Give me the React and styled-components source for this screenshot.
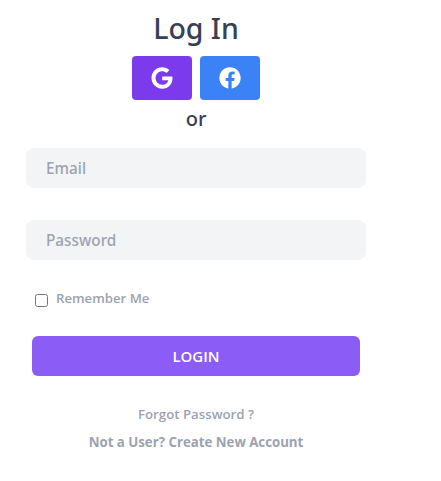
import React from "react";
import styled, { createGlobalStyle } from "styled-components";
import { FaGoogle, FaFacebook } from "react-icons/fa";

const Global = createGlobalStyle`
  html, body { margin: 0; padding: 0; background: #fff; }
  body { font-family: "Open Sans", "Noto Sans", sans-serif; }
  * { box-sizing: border-box; }
`;
const Page = styled.div`
  width: 392px; display: flex; flex-direction: column; align-items: center; padding-top: 8px;
`;
const Title = styled.h1`
  margin: 0; font-family: "Noto Sans", sans-serif; font-size: 28.5px; line-height: 40px; font-weight: 500; color: #374151;
`;
const Socials = styled.div`display: flex; gap: 8px; margin-top: 8px;`;
const Social = styled.button`
  width: 60px; height: 44px; border: 0; border-radius: 4px; background: ${p => p.$bg}; color: #fff;
  display: flex; align-items: center; justify-content: center; font-size: 22px; padding: 0;
`;
const Or = styled.div`font-family: "Noto Sans", sans-serif; font-size: 20px; line-height: 28px; font-weight: 500; color: #374151; margin-top: 5px;`;
const Field = styled.input`
  display: block; width: 340px; height: 40px; margin: ${p => p.$mt}px 0 0; border: 0; border-radius: 8px;
  background: #f3f4f6; padding: 0 20px; font: 500 15.3px "Noto Sans", sans-serif; color: #374151;
  &::placeholder { color: #9ca3af; opacity: 1; }
`;
const RememberRow = styled.label`
  width: 340px; display: flex; align-items: center; gap: 8px; margin-top: 29px; padding-left: 9px;
  font-size: 13.2px; font-weight: 600; line-height: 18px; color: #9ca3af;
`;
const Check = styled.input`width: 13px; height: 13px; margin: 4px 0 0;`;
const Login = styled.button`
  width: 328px; height: 40px; margin-top: 29px; border: 0; border-radius: 6px; background: #8b5cf6; color: #fff;
  font: 600 15px "Open Sans", sans-serif;
`;
const Link = styled.a`
  font-size: 13.25px; line-height: 18px; color: #9ca3af; font-weight: ${p => p.$w};
  margin-top: ${p => p.$mt}px;
`;

export default function App() {
  return (
    <>
      <Global />
      <Page>
        <Title>Log In</Title>
        <Socials>
          <Social $bg="#7c3aed"><FaGoogle /></Social>
          <Social $bg="#3b82f6"><FaFacebook /></Social>
        </Socials>
        <Or>or</Or>
        <Field $mt={15} placeholder="Email" />
        <Field $mt={32} placeholder="Password" />
        <RememberRow><Check type="checkbox" />Remember Me</RememberRow>
        <Login>LOGIN</Login>
        <Link $w={600} $mt={29}>Forgot Password ?</Link>
        <Link $w={700} $mt={10}>Not a User? Create New Account</Link>
      </Page>
    </>
  );
}
